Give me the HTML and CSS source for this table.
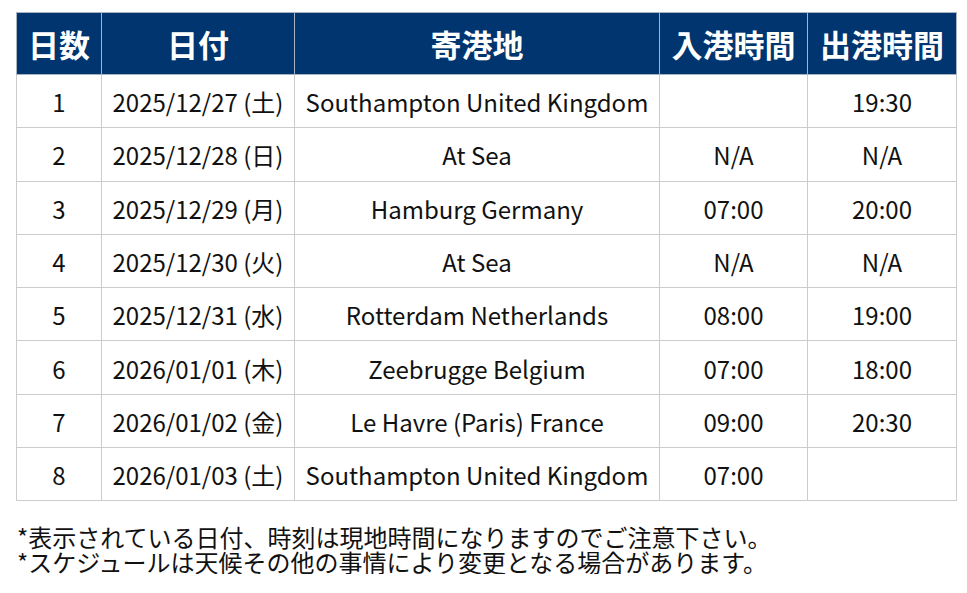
FILE: index.html
```html
<!DOCTYPE html>
<html lang="ja">
<head>
<meta charset="utf-8">
<link rel="stylesheet" href="styles.css">
</head>
<body>
<div class="page">
<table class="schedule">
<colgroup>
<col class="c-day"><col class="c-date"><col class="c-port"><col class="c-in"><col class="c-out">
</colgroup>
<thead>
<tr><th>日数</th><th>日付</th><th>寄港地</th><th>入港時間</th><th>出港時間</th></tr>
</thead>
<tbody>
<tr><td>1</td><td>2025/12/27 (土)</td><td>Southampton United Kingdom</td><td></td><td>19:30</td></tr>
<tr><td>2</td><td>2025/12/28 (日)</td><td>At Sea</td><td>N/A</td><td>N/A</td></tr>
<tr><td>3</td><td>2025/12/29 (月)</td><td>Hamburg Germany</td><td>07:00</td><td>20:00</td></tr>
<tr><td>4</td><td>2025/12/30 (火)</td><td>At Sea</td><td>N/A</td><td>N/A</td></tr>
<tr><td>5</td><td>2025/12/31 (水)</td><td>Rotterdam Netherlands</td><td>08:00</td><td>19:00</td></tr>
<tr><td>6</td><td>2026/01/01 (木)</td><td>Zeebrugge Belgium</td><td>07:00</td><td>18:00</td></tr>
<tr><td>7</td><td>2026/01/02 (金)</td><td>Le Havre (Paris) France</td><td>09:00</td><td>20:30</td></tr>
<tr><td>8</td><td>2026/01/03 (土)</td><td>Southampton United Kingdom</td><td>07:00</td><td></td></tr>
</tbody>
</table>
<div class="notes">
<p>*表示されている日付、時刻は現地時間になりますのでご注意下さい。</p>
<p>*スケジュールは天候その他の事情により変更となる場合があります。</p>
</div>
</div>
</body>
</html>
```

FILE: styles.css
```css
html, body {
  margin: 0;
  padding: 0;
  background: #ffffff;
}
body {
  font-family: "Noto Sans CJK JP", "Noto Sans", sans-serif;
  color: #111111;
}
.page {
  padding: 12px 11px 0 16px;
}
.schedule {
  border-collapse: collapse;
  table-layout: fixed;
  width: 940px;
}
.c-day { width: 85px; }
.c-date { width: 193px; }
.c-port { width: 365px; }
.c-in { width: 148px; }
.c-out { width: 149px; }
.schedule th,
.schedule td {
  border: 1px solid #cccccc;
  text-align: center;
  padding: 0;
  white-space: nowrap;
}
.schedule th {
  background: #003570;
  color: #ffffff;
  font-weight: 700;
  font-size: 31px;
  height: 61px;
  line-height: 1;
  border-color: #a9b3c3;
}
.schedule td {
  font-size: 24px;
  height: 50.3px;
  line-height: 1;
  padding-top: 2px;
}
.notes {
  margin-top: 23px;
  font-size: 24px;
  line-height: 25px;
  color: #111111;
}
.notes p {
  margin: 0;
  padding-left: 1px;
}
```
